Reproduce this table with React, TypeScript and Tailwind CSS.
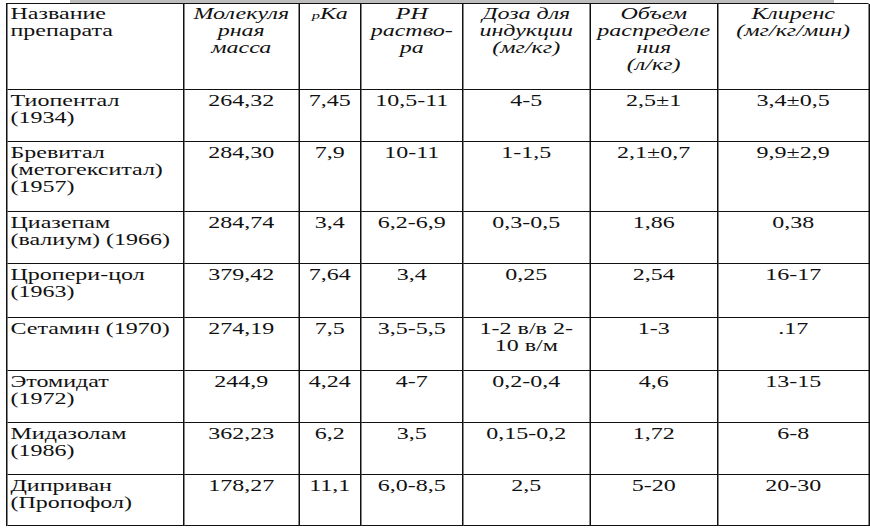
const header: React.ReactNode[] = [
  <>Молекуля<br />рная<br />масса</>,
  <><span className="text-[11px]">р</span>Ка</>,
  <>РН<br />раство-<br />ра</>,
  <>Доза для<br />индукции<br />(мг/кг)</>,
  <>Объем<br />распределе<br />ния<br />(л/кг)</>,
  <>Клиренс<br />(мг/кг/мин)</>,
];

// name lines, then the six numeric columns
const rows: { name: string[]; cells: (string | string[])[] }[] = [
  { name: ["Тиопентал", "(1934)"], cells: ["264,32", "7,45", "10,5-11", "4-5", "2,5±1", "3,4±0,5"] },
  { name: ["Бревитал", "(метогекситал)", "(1957)"], cells: ["284,30", "7,9", "10-11", "1-1,5", "2,1±0,7", "9,9±2,9"] },
  { name: ["Циазепам", "(валиум) (1966)"], cells: ["284,74", "3,4", "6,2-6,9", "0,3-0,5", "1,86", "0,38"] },
  { name: ["Цропери-цол", "(1963)"], cells: ["379,42", "7,64", "3,4", "0,25", "2,54", "16-17"] },
  { name: ["Сетамин (1970)"], cells: ["274,19", "7,5", "3,5-5,5", ["1-2 в/в 2-", "10 в/м"], "1-3", ".17"] },
  { name: ["Этомидат", "(1972)"], cells: ["244,9", "4,24", "4-7", "0,2-0,4", "4,6", "13-15"] },
  { name: ["Мидазолам", "(1986)"], cells: ["362,23", "6,2", "3,5", "0,15-0,2", "1,72", "6-8"] },
  { name: ["Диприван", "(Пропофол)"], cells: ["178,27", "11,1", "6,0-8,5", "2,5", "5-20", "20-30"] },
];

const lines = (v: string | string[]) =>
  (Array.isArray(v) ? v : [v]).map((l, i) => (
    <span key={i} className="block">
      {l}
    </span>
  ));

export default function App() {
  return (
    <div className="w-[870px] h-[528px] overflow-hidden bg-white font-['Liberation_Serif',serif] text-[16px] leading-[17px] text-[#111]">
      <div className="h-[3px] ml-[70px] mr-[36px] bg-[#bdbdbd]" />
      <div className="ml-[6px] w-[575px] origin-top-left scale-x-150">
        <div className="grid grid-cols-[118px_76.67px_41.33px_68px_84.67px_85.33px_100.67px] grid-rows-[86px_52px_70px_52px_54px_53px_52px_52px_51px] border-l border-t border-[#111]">
          <div className="border-r border-b border-[#111] pl-[2px] pt-[1px]">
            Название
            <br />
            препарата
          </div>
          {header.map((h, i) => (
            <div key={i} className="border-r border-b border-[#111] pt-[1px] text-center italic">
              {h}
            </div>
          ))}
          {rows.map((r) => (
            <>
              <div key={r.name[0]} className="border-r border-b border-[#111] pl-[2px] pt-[2px]">
                {lines(r.name)}
              </div>
              {r.cells.map((c, j) => (
                <div key={r.name[0] + j} className="border-r border-b border-[#111] pt-[2px] text-center">
                  {lines(c)}
                </div>
              ))}
            </>
          ))}
        </div>
      </div>
    </div>
  );
}
